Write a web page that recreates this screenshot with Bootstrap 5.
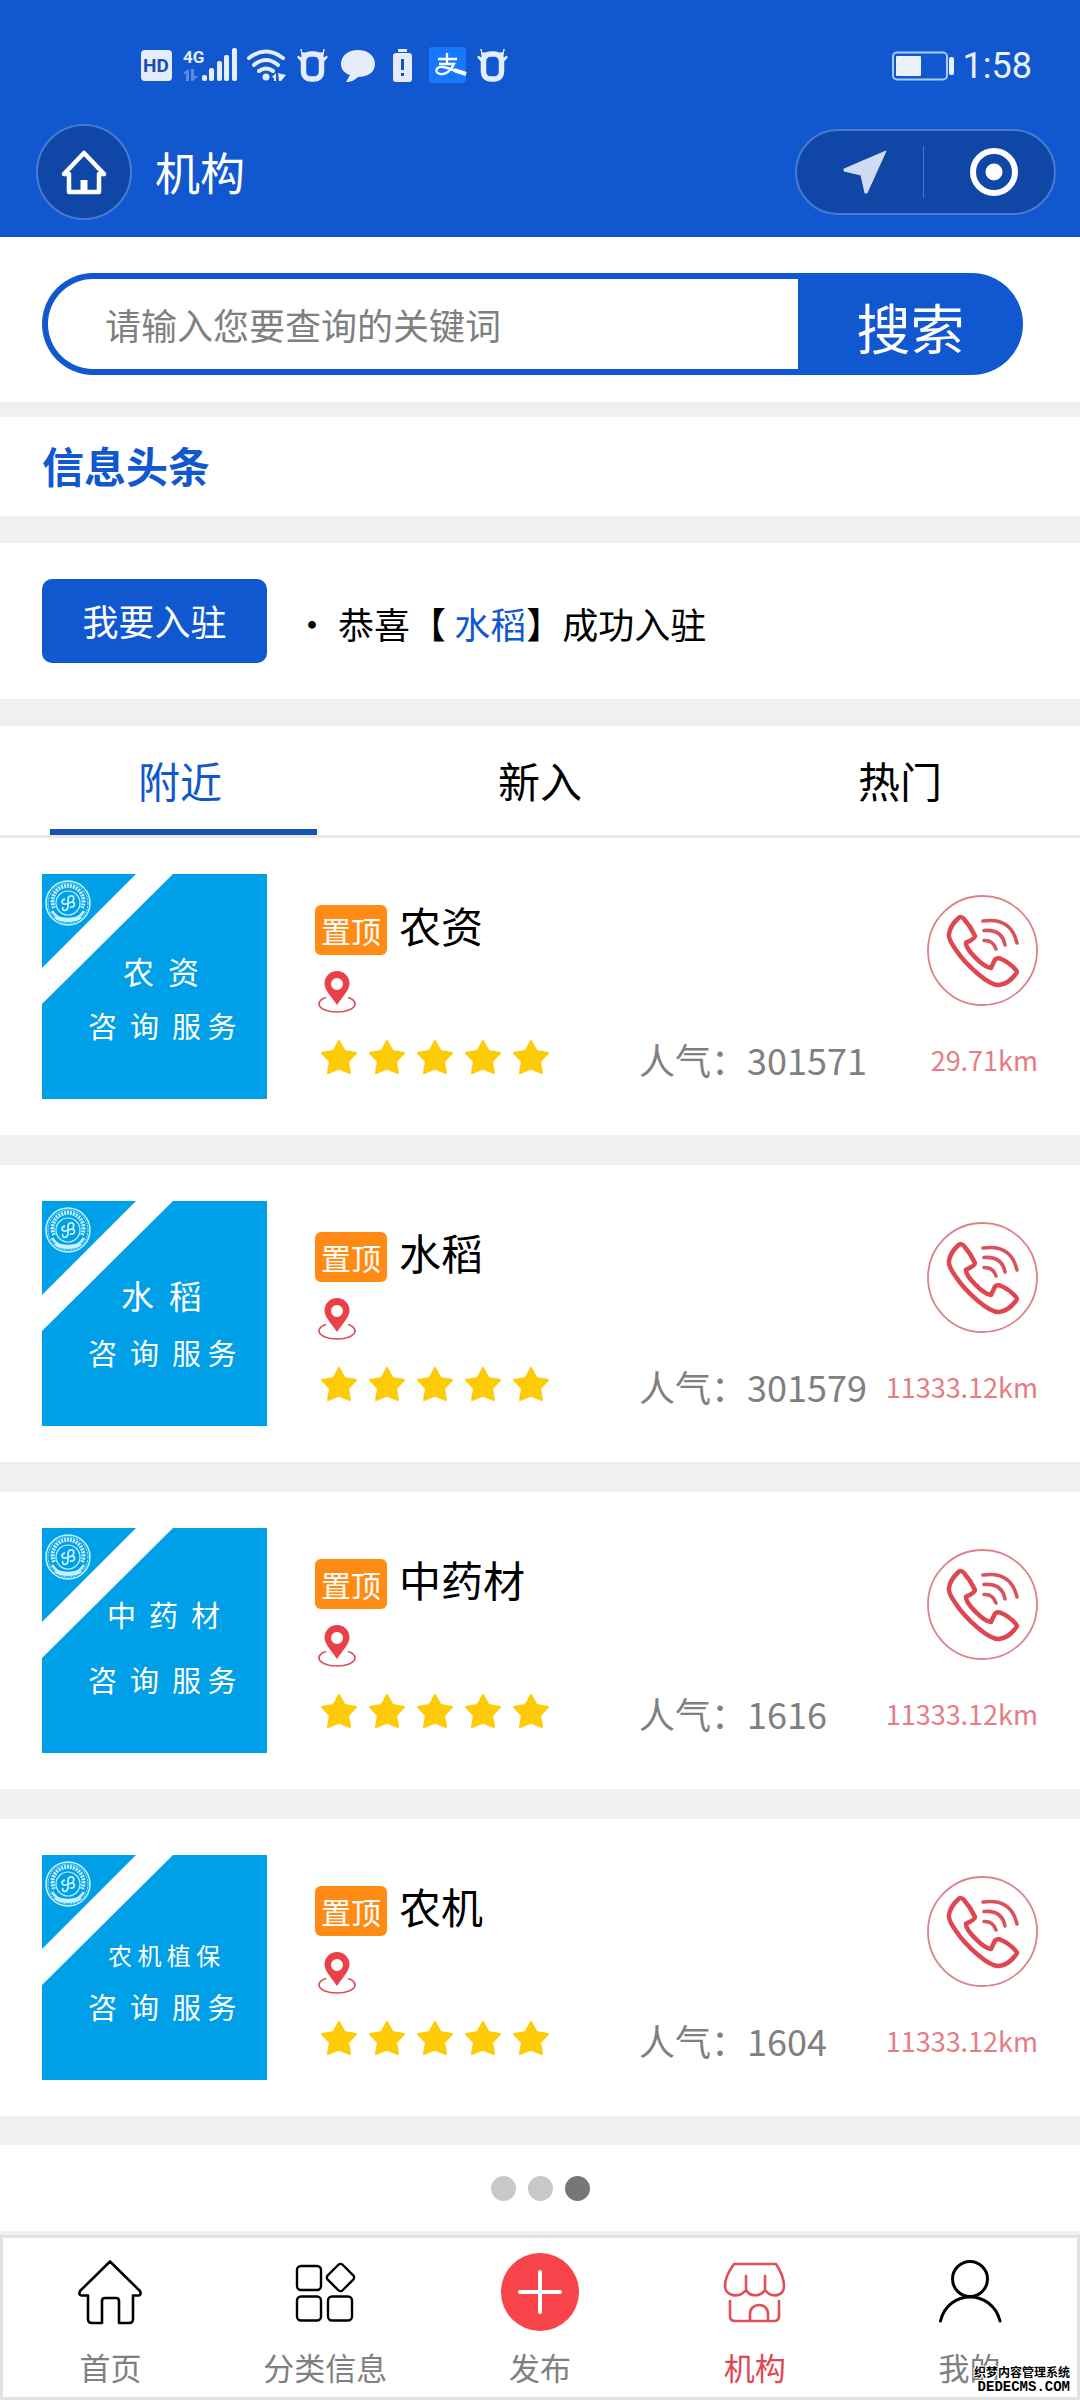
<!DOCTYPE html>
<html lang="zh-CN">
<head>
<meta charset="utf-8">
<meta name="viewport" content="width=device-width, initial-scale=1">
<title>机构</title>
<link rel="stylesheet" href="https://cdn.jsdelivr.net/npm/bootstrap@5.3.0/dist/css/bootstrap.min.css">
<style>
:root{--brand:#1157cf;--strip:#f0f0f0}
body{font-family:"Noto Sans CJK SC","Noto Sans",sans-serif;color:#000;background:var(--strip);line-height:1.5}
a{color:inherit;text-decoration:none}
svg{display:block;flex:none}
.topbar{background:var(--brand);color:#fff;padding-bottom:17px}
.status{height:124px;padding:8px 48px 0 140px}
.clock{font:36px/40px Roboto,sans-serif;color:#eaf1fc}
.navline{padding:0 24px 0 36px}
.round-btn{width:96px;height:96px;background:#1047a6;border:2px solid #477bd3;border-radius:50%;color:#fff}
.capsule{height:86px;width:261px;background:#1047a6;border:2px solid #477bd3;border-radius:43px}
.capsule button{color:#fff;background:none;border:0;height:100%;padding:0 0 0 10px}
.capsule .split{width:1px;height:52px;background:#4a78c8}
.page-title{font-size:45px;line-height:60px;margin:0 0 0 23px;font-weight:400}
.search-area{padding:36px 57px 27px 42px}
.search-box{height:102px}
.search-box input{border:6px solid var(--brand);border-right:0;border-radius:51px 0 0 51px;padding:0 0 0 57px;font-size:36px;background:#fff;min-width:0;outline:0}
.search-box input::placeholder{color:#808080;opacity:1}
.search-box button{width:225px;border:0;border-radius:0 51px 51px 0;background:var(--brand);color:#fff;font-size:54px;line-height:60px;padding:6px 0 0}
.headline{font-size:42px;line-height:63px;font-weight:700;color:var(--brand);padding:16px 42px 20px;margin:15px 0 27px}
.join{padding:36px 42px;gap:27px;margin-bottom:27px}
.join-btn{width:225px;height:84px;border-radius:10px;background:var(--brand);color:#fff;font-size:36px;line-height:54px;border:0;padding:0 0 2px}
.join-text{font-size:36px;line-height:54px;margin:3px 0 0}
.brand-text{color:#1157cf}
.tabs-line{border-bottom:3px solid #e9e9e9}
.tabs-line a{font-size:42px;line-height:60px;padding:24px 0 25px;position:relative}
.tabs-line .on{color:var(--brand)}
.tabs-line .on::after{content:"";position:absolute;left:14%;width:74%;bottom:0;height:6px;background:#1a51b5}
.org{padding:36px 42px;margin-bottom:30px;gap:48px}
.org:last-child{margin-bottom:29px}
.org-info{padding-top:21px;min-width:0}
.org-upper{height:142px}
.title-line{padding-top:10px;gap:12px}
.pin-top{width:72px;height:50px;border-radius:6px;background:#ff8b14;color:#fff;font-size:30px;line-height:50px;text-align:center}
.org-name{font-size:42px;line-height:40px;font-weight:400;margin:0}
.place{margin:16px 0 0 3px}
.org-lower{line-height:40px}
.star-set{margin:0 89px 3px 5px}
.popular{font-size:36px;color:#808080}
.range{font-size:27px;color:#e67c84;padding-top:3px}
.call-btn{width:111px;height:111px;border:0;background:none;padding:0}
.cover-text text{fill:#fff;font-family:"Noto Sans CJK SC",sans-serif;white-space:pre}
.pager{height:86px;gap:12px;margin-bottom:4px}
.pager i{width:25px;height:25px;border-radius:50%;background:#c8c8c8}
.pager i.on{background:#777}
.dock{border:3px solid #e2e2e2;padding:15px 0 7px}
.dock a{font-size:31px;line-height:46px;color:#808080;gap:13px}
.dock a.on{color:#e1464e}
.watermark{position:absolute;right:10px;bottom:6px;color:#000;text-shadow:1px 0 #fff,-1px 0 #fff,0 1px #fff,0 -1px #fff,1px 1px #fff,-1px -1px #fff}
.watermark b{font:700 12px/16px "Noto Sans CJK SC",sans-serif}
.watermark span{font:700 14px/14px "Liberation Mono",monospace}
</style>
<script defer src="https://cdn.jsdelivr.net/npm/bootstrap@5.3.0/dist/js/bootstrap.bundle.min.js"></script>
</head>
<body class="d-flex flex-column min-vh-100">

<svg width="0" height="0" class="position-absolute" aria-hidden="true">
  <symbol id="bull" viewBox="0 0 31 34">
    <rect x="6.500" y="5" width="18" height="25" rx="7" fill="none" stroke="#e6edfa" stroke-width="5.500"/>
    <path d="M4 0 C4 4 6 4 9 4 L6 10 L1 7 L1 9 L5 13 V7 Z M27 0 C27 4 25 4 22 4 L25 10 L30 7 L30 9 L26 13 V7Z" fill="#e6edfa" stroke="#e6edfa" stroke-width="1"/>
  </symbol>
  <symbol id="cover" viewBox="0 0 225 225">
    <path fill="#00a0e9" d="M0 0H225V225H0Z"/>
    <path fill="#fff" d="M94 0H131L0 130V94Z"/>
    <g fill="none" stroke="#c5f2fd">
      <circle cx="26" cy="29" r="22" stroke-width="1.5"/>
      <circle cx="26" cy="29" r="20" stroke-width="1" stroke-dasharray="2 1"/>
      <path d="M12 34A15.500 15.500 0 1 1 40 34" stroke-width="4" stroke-dasharray="2 1"/>
      <circle cx="26" cy="29" r="12" stroke-width="1.2"/>
      <path d="M10 37C16 46 20 44 26 45C32 44 36 46 42 37M13 43C19 48 33 48 39 43" stroke-width="2.500"/>
      <path d="M31 27C34 21 27 20 26 25L26 33C25 38 19 37 21 33M23 25C18 26 20 31 24 30L30 28C34 28 33 34 28 33" stroke-width="1.800"/>
    </g>
  </symbol>
  <symbol id="pin" viewBox="0 0 38 42">
    <path fill="#ea4149" fill-rule="evenodd" d="M19 0C12 0 6.500 5.500 6.500 12.500C6.500 19 13 25 19 34C25 25 31.500 19 31.500 12.500C31.500 5.500 26 0 19 0ZM19 7A6 6 0 1 1 19 19A6 6 0 1 1 19 7Z"/>
    <path fill="none" stroke="#d9505d" stroke-width="1.700" d="M8 26.500C3 28 1 30 1 33C1 37.500 9 41 19 41S37 37.500 37 33C37 30 35 28 30 26.500"/>
  </symbol>
  <symbol id="stars" viewBox="0 0 230 36">
    <g fill="#ffcb05" stroke="#ffcb05" stroke-width="2" stroke-linejoin="round">
      <path id="star" d="M19 2L24.500 12L36 14L28 22.500L30 34L19 29.500L8 34L10 22.500L2 14L13.500 12Z"/>
      <use href="#star" x="48"/><use href="#star" x="96"/><use href="#star" x="144"/><use href="#star" x="192"/>
    </g>
  </symbol>
  <symbol id="call" viewBox="0 0 111 111">
    <circle cx="55.500" cy="55.500" r="54.500" fill="#fff" stroke="#e08089" stroke-width="1.800"/>
    <g fill="none" stroke="#de474f" stroke-linecap="round" stroke-linejoin="round">
      <path stroke-width="4.500" d="M31 23.500Q34 20.500 37 24Q44 32 48 41Q48 44 39 47.500C38 54 56 72 64 73L68 64.500Q70 62.500 73 63.500Q82 67 89 75Q91 77 88 80Q81 89 72 90C62 91 39 70 29 55Q21 44 22 39Q23 31 31 23.500Z"/>
      <path stroke-width="3.500" stroke="#d8535c" d="M56 26Q84 22 90 48M57 35.500Q75 34 78 50M57 45.500Q66 45 69 54"/>
    </g>
  </symbol>
</svg>

<header class="topbar">
  <div class="status d-flex align-items-center justify-content-between">
    <svg width="370" height="40" viewBox="0 0 370 40" role="img" aria-label="状态栏">
      <g fill="#e6edfa">
        <rect x="1" y="4" width="31" height="31" rx="4"/>
        <text x="3" y="26" font-family="Roboto" font-weight="700" font-size="19" style="fill:#1650b8">HD</text>
        <text x="43" y="17" font-family="Roboto" font-weight="700" font-size="17">4G</text>
        <path opacity=".35" d="M44 26L49 23V35H46V28H44ZM51 23H54V30H58L53 35H51Z"/>
        <rect x="62" y="29" width="5" height="6" rx="2"/><rect x="69" y="22" width="5" height="13" rx="2"/><rect x="77" y="15" width="5" height="20" rx="2"/><rect x="84" y="9" width="5" height="26" rx="2"/><rect x="92" y="2" width="5" height="33" rx="2"/>
        <circle cx="126" cy="31" r="3.500"/>
        <path d="M132 31L136 27V35H134V32ZM138 27L146 29L141 35H139Z"/>
        <path d="M218 4C228 4 235 10 235 18S228 31 218 31C215 34 211 36 206 36L210 29C204 27 201 23 201 18C201 10 208 4 218 4Z"/>
        <rect x="258" y="3" width="9" height="3"/>
        <rect x="253" y="7" width="19" height="29" rx="3"/>
      </g>
      <g fill="none" stroke="#e6edfa" stroke-width="4" stroke-linecap="round">
        <path d="M109 12Q126 -1 143 12M114 19Q126 9 138 19M119 25Q126 20 133 25"/>
      </g>
      <path d="M261 13H264V24H261ZM261 27H264V30H261Z" fill="#1650b8"/>
      <use href="#bull" x="157" y="3" width="31" height="34"/>
      <use href="#bull" x="337" y="3" width="31" height="34"/>
      <rect x="289" y="1" width="37" height="36" rx="3" fill="#1677ff"/>
      <g fill="none" stroke="#fff" stroke-width="2">
        <path d="M298 13H317M307 7V18M299 18H314C311 25 305 29 300 28C293 26 297 20 303 21C310 22 317 26 326 28" stroke-width="2.300"/>
        <path d="M314 24L326 28" stroke-width="4"/>
      </g>
    </svg>
    <div class="d-flex align-items-center">
      <svg width="63" height="31" viewBox="0 0 63 31" role="img" aria-label="电池">
        <rect x="1" y="1.500" width="54" height="27" rx="4" fill="none" stroke="#a9cbf8" stroke-width="2"/>
        <rect x="4" y="5" width="25" height="20" rx="1" fill="#eaf1fc"/><rect x="57" y="6" width="5" height="18" rx="2" fill="#eaf1fc"/>
      </svg>
      <span class="clock ms-2">1:58</span>
    </div>
  </div>
  <div class="navline d-flex align-items-center">
    <button type="button" class="round-btn d-flex align-items-center justify-content-center p-0" aria-label="主页">
      <svg width="48" height="46" viewBox="0 0 48 46" fill="none" stroke="#fff" stroke-width="4.500"><path d="M4 25L24 4L44 25H39V43H9V25Z" stroke-linejoin="round"/><path d="M20.500 31H27.500V43H20.500Z" fill="#fff" stroke="none"/></svg>
    </button>
    <h1 class="page-title">机构</h1>
    <div class="capsule ms-auto d-flex align-items-center">
      <button type="button" class="flex-fill d-flex align-items-center justify-content-center" aria-label="定位">
        <svg width="44" height="44" viewBox="0 0 44 44"><path d="M43 1L24 43H22L18 25L1 21V19Z" fill="#d0dcf2" stroke="#d0dcf2" stroke-linejoin="round"/></svg>
      </button>
      <span class="split"></span>
      <button type="button" class="flex-fill d-flex align-items-center justify-content-center" aria-label="关闭">
        <svg width="48" height="48" viewBox="0 0 48 48"><circle cx="24" cy="24" r="21" fill="none" stroke="#fff" stroke-width="6"/><circle cx="24" cy="24" r="8.500" fill="#fff"/></svg>
      </button>
    </div>
  </div>
</header>

<main>
  <form class="search-area bg-white">
    <div class="search-box d-flex">
      <input id="kw" type="text" class="flex-grow-1" aria-label="关键词" placeholder="请输入您要查询的关键词">
      <button type="button">搜索</button>
    </div>
  </form>

  <h2 class="headline bg-white">信息头条</h2>

  <section class="join bg-white d-flex align-items-center">
    <button type="button" class="join-btn">我要入驻</button>
    <p class="join-text">・ 恭喜【 <a href="#" class="brand-text">水稻</a>】成功入驻</p>
  </section>

  <nav class="tabs-line bg-white row g-0 text-center">
    <a href="#" class="col on">附近</a>
    <a href="#" class="col">新入</a>
    <a href="#" class="col">热门</a>
  </nav>

  <div>
    <article class="org bg-white d-flex">
      <svg width="225" height="225" viewBox="0 0 225 225"><use href="#cover"/><g class="cover-text"><text x="81" y="110" font-size="31">农  资</text><text x="46" y="164" font-size="29">咨  询  服 务</text></g></svg>
      <div class="org-info flex-grow-1">
        <div class="org-upper d-flex justify-content-between">
          <div>
            <div class="title-line d-flex"><span class="pin-top">置顶</span><h3 class="org-name">农资</h3></div>
            <svg class="place" width="38" height="42"><use href="#pin"/></svg>
          </div>
          <button type="button" class="call-btn" aria-label="拨打电话"><svg width="111" height="111"><use href="#call"/></svg></button>
        </div>
        <div class="org-lower d-flex align-items-center">
          <svg class="star-set" width="230" height="36"><use href="#stars"/></svg>
          <span class="popular">人气：301571</span><span class="range ms-auto">29.71km</span>
        </div>
      </div>
    </article>

    <article class="org bg-white d-flex">
      <svg width="225" height="225" viewBox="0 0 225 225"><use href="#cover"/><g class="cover-text"><text x="79" y="108" font-size="33">水  稻</text><text x="46" y="164" font-size="29">咨  询  服 务</text></g></svg>
      <div class="org-info flex-grow-1">
        <div class="org-upper d-flex justify-content-between">
          <div>
            <div class="title-line d-flex"><span class="pin-top">置顶</span><h3 class="org-name">水稻</h3></div>
            <svg class="place" width="38" height="42"><use href="#pin"/></svg>
          </div>
          <button type="button" class="call-btn" aria-label="拨打电话"><svg width="111" height="111"><use href="#call"/></svg></button>
        </div>
        <div class="org-lower d-flex align-items-center">
          <svg class="star-set" width="230" height="36"><use href="#stars"/></svg>
          <span class="popular">人气：301579</span><span class="range ms-auto">11333.12km</span>
        </div>
      </div>
    </article>

    <article class="org bg-white d-flex">
      <svg width="225" height="225" viewBox="0 0 225 225"><use href="#cover"/><g class="cover-text"><text x="65" y="99" font-size="29">中  药  材</text><text x="46" y="164" font-size="29">咨  询  服 务</text></g></svg>
      <div class="org-info flex-grow-1">
        <div class="org-upper d-flex justify-content-between">
          <div>
            <div class="title-line d-flex"><span class="pin-top">置顶</span><h3 class="org-name">中药材</h3></div>
            <svg class="place" width="38" height="42"><use href="#pin"/></svg>
          </div>
          <button type="button" class="call-btn" aria-label="拨打电话"><svg width="111" height="111"><use href="#call"/></svg></button>
        </div>
        <div class="org-lower d-flex align-items-center">
          <svg class="star-set" width="230" height="36"><use href="#stars"/></svg>
          <span class="popular">人气：1616</span><span class="range ms-auto">11333.12km</span>
        </div>
      </div>
    </article>

    <article class="org bg-white d-flex">
      <svg width="225" height="225" viewBox="0 0 225 225"><use href="#cover"/><g class="cover-text"><text x="66" y="110" font-size="24">农 机 植 保</text><text x="46" y="164" font-size="29">咨  询  服 务</text></g></svg>
      <div class="org-info flex-grow-1">
        <div class="org-upper d-flex justify-content-between">
          <div>
            <div class="title-line d-flex"><span class="pin-top">置顶</span><h3 class="org-name">农机</h3></div>
            <svg class="place" width="38" height="42"><use href="#pin"/></svg>
          </div>
          <button type="button" class="call-btn" aria-label="拨打电话"><svg width="111" height="111"><use href="#call"/></svg></button>
        </div>
        <div class="org-lower d-flex align-items-center">
          <svg class="star-set" width="230" height="36"><use href="#stars"/></svg>
          <span class="popular">人气：1604</span><span class="range ms-auto">11333.12km</span>
        </div>
      </div>
    </article>
  </div>

  <div class="pager bg-white d-flex align-items-center justify-content-center"><i></i><i></i><i class="on"></i></div>
</main>

<footer class="position-relative mt-auto">
  <nav class="dock bg-white row g-0">
    <a href="#" class="col d-flex flex-column align-items-center">
      <svg width="78" height="78" viewBox="0 0 78 78" fill="none" stroke="#000" stroke-width="2.600" stroke-linejoin="round"><path d="M39 8.500L69 38Q71 43 66 42.500H62V66Q62 70 58 70H48V48Q48 45 45 45H34Q31 45 31 48V70H21Q17 70 17 66V42.500H12Q7 43 9 38Z"/></svg>
      首页
    </a>
    <a href="#" class="col d-flex flex-column align-items-center">
      <svg width="78" height="78" viewBox="0 0 78 78" fill="none" stroke="#000" stroke-width="2.400"><rect x="11" y="13" width="24" height="24" rx="4"/><rect x="11" y="43.500" width="24" height="24" rx="4"/><rect x="42" y="43.500" width="24" height="24" rx="4"/><rect x="44" y="14" width="21" height="21" rx="3" transform="rotate(45 54.500 24.500)"/></svg>
      分类信息
    </a>
    <a href="#" class="col d-flex flex-column align-items-center">
      <svg width="78" height="78" viewBox="0 0 78 78"><circle cx="39" cy="39" r="39" fill="#f9434a"/><path d="M39 19V59M19 39H59" stroke="#fff" stroke-width="4" stroke-linecap="round"/></svg>
      发布
    </a>
    <a href="#" class="col d-flex flex-column align-items-center on">
      <svg width="78" height="78" viewBox="0 0 78 78" fill="none" stroke="#de4f58" stroke-width="2.600" stroke-linecap="round" stroke-linejoin="round"><path d="M18 11H60Q68 23 68 33C68 43 56 46 49 37C44 44 34 44 30 37C23 46 9 43 9 33Q9 23 18 11ZM30 23V37M49 23V37M14 48V63Q14 68 19 68H58Q63 68 63 63V48M34 67V61C34 49 52 49 52 61V67"/></svg>
      机构
    </a>
    <a href="#" class="col d-flex flex-column align-items-center">
      <svg width="78" height="78" viewBox="0 0 78 78" fill="none" stroke="#000" stroke-width="3" stroke-linecap="round"><circle cx="39" cy="26" r="17.500"/><path d="M9.500 68C17 36 61 36 69 68"/></svg>
      我的
    </a>
  </nav>
  <div class="watermark d-flex flex-column align-items-end"><b>织梦内容管理系统</b><span>DEDECMS.COM</span></div>
</footer>
</body>
</html>
